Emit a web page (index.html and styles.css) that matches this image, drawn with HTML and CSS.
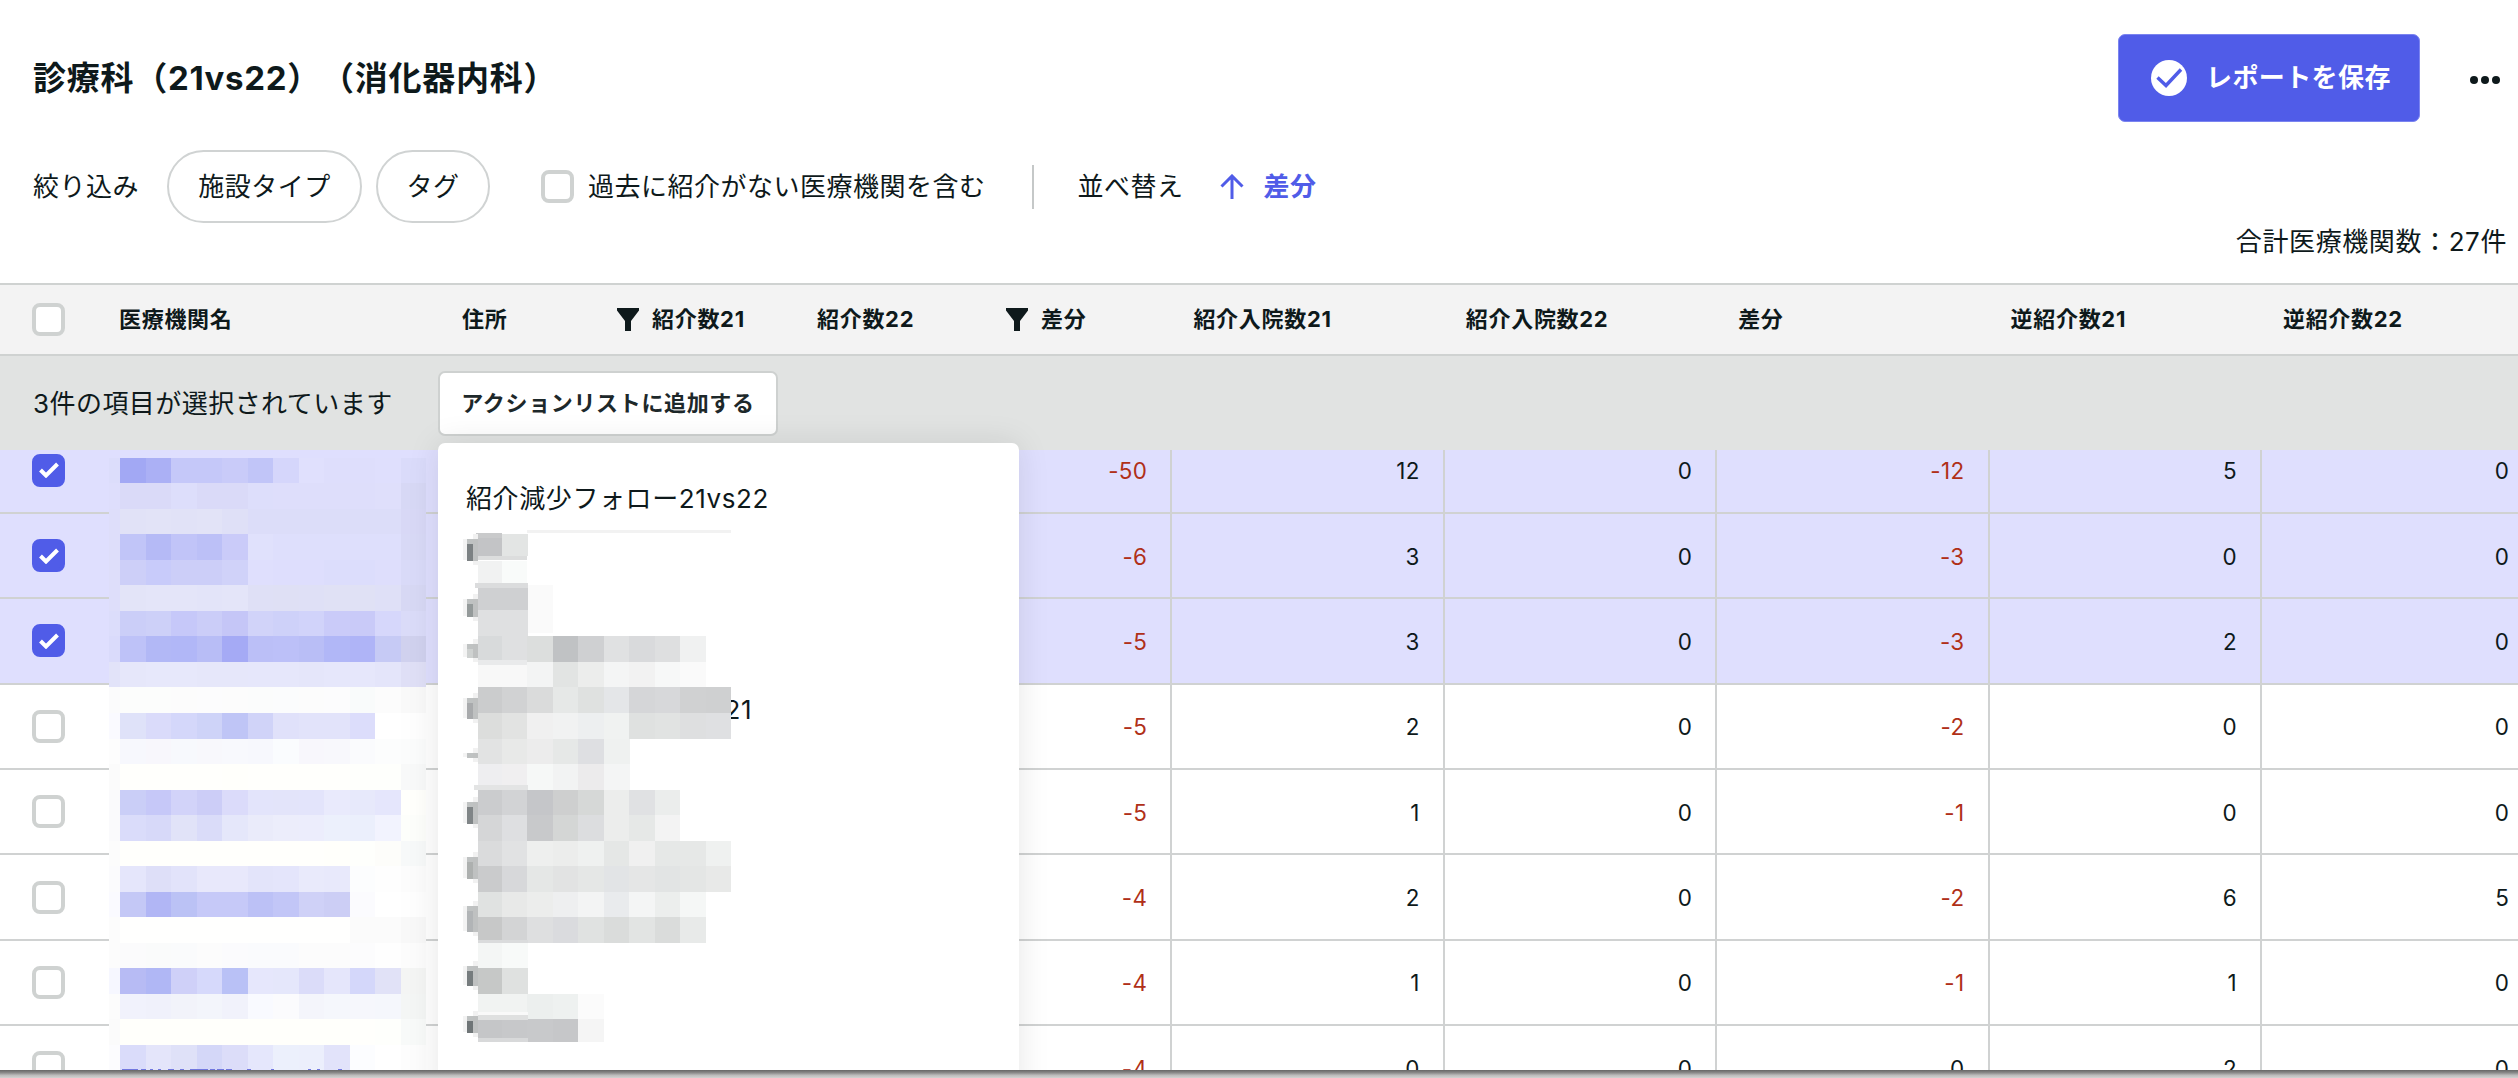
FILE: index.html
```html
<!DOCTYPE html>
<html lang="ja">
<head>
<meta charset="utf-8">
<title>診療科（21vs22）（消化器内科）</title>
<link rel="stylesheet" href="styles.css">
</head>
<body>
<div class="page">
  <header class="header">
    <h1 class="title">診療科（21vs22）（消化器内科）</h1>
    <button class="save">
      <svg class="save-icon" viewBox="0 0 36 36"><circle cx="18" cy="18" r="18" fill="#fff"/><path d="M6.500 17.500l8.500 8L30 9.500" fill="none" stroke="#505ce8" stroke-width="3.400"/></svg>
      <span>レポートを保存</span>
    </button>
    <svg class="more" viewBox="0 0 30 8"><circle cx="4" cy="4" r="4"/><circle cx="15" cy="4" r="4"/><circle cx="26" cy="4" r="4"/></svg>
  </header>

  <div class="filters">
    <span>絞り込み</span>
    <button class="chip chip-type">施設タイプ</button>
    <button class="chip chip-tag">タグ</button>
    <span class="check filter-check"></span>
    <span>過去に紹介がない医療機関を含む</span>
    <span class="divider"></span>
    <span>並べ替え</span>
    <svg class="arrow" viewBox="0 0 24 26"><path d="M12 25V2M1.500 12.500L12 2l10.500 10.500" fill="none" stroke="#505ce8" stroke-width="3"/></svg>
    <span class="sort-key">差分</span>
  </div>
  <div class="count">合計医療機関数：27件</div>

  <div class="grid thead">
    <div class="cell-check"><span class="check"></span></div>
    <div class="th">医療機関名</div>
    <div class="th">住所</div>
    <div class="th"><svg class="funnel" viewBox="0 0 22 23"><path d="M0 0h22v2.500L14 13v10H8V13L0 2.500z"/></svg>紹介数21</div>
    <div class="th">紹介数22</div>
    <div class="th"><svg class="funnel" viewBox="0 0 22 23"><path d="M0 0h22v2.500L14 13v10H8V13L0 2.500z"/></svg>差分</div>
    <div class="th">紹介入院数21</div>
    <div class="th">紹介入院数22</div>
    <div class="th">差分</div>
    <div class="th">逆紹介数21</div>
    <div class="th">逆紹介数22</div>
  </div>

  <div class="selection">
    <span class="selection-text">3件の項目が選択されています</span>
    <button class="action">アクションリストに追加する</button>
    <div class="menu">
      <div class="menu-item">紹介減少フォロー21vs22</div>
      <div class="menu-item"></div>
      <div class="menu-item"></div>
      <div class="menu-item"></div>
      <div class="menu-item menu-item-tail">21</div>
      <svg class="mosaic-menu" id="menu-mosaic" viewBox="456 528 280 540"></svg>
    </div>
  </div>

  <main class="rows">
    <div class="grid row selected"><div class="cell-check"><span class="check on"><svg viewBox="0 0 20 16"><path d="M1.500 8l5.500 5.500L18.500 2"/></svg></span></div><div></div><div></div><div></div><div></div><div class="num neg">-50</div><div class="num">12</div><div class="num">0</div><div class="num neg">-12</div><div class="num">5</div><div class="num">0</div></div>
    <div class="grid row selected"><div class="cell-check"><span class="check on"><svg viewBox="0 0 20 16"><path d="M1.500 8l5.500 5.500L18.500 2"/></svg></span></div><div></div><div></div><div></div><div></div><div class="num neg">-6</div><div class="num">3</div><div class="num">0</div><div class="num neg">-3</div><div class="num">0</div><div class="num">0</div></div>
    <div class="grid row selected"><div class="cell-check"><span class="check on"><svg viewBox="0 0 20 16"><path d="M1.500 8l5.500 5.500L18.500 2"/></svg></span></div><div></div><div></div><div></div><div></div><div class="num neg">-5</div><div class="num">3</div><div class="num">0</div><div class="num neg">-3</div><div class="num">2</div><div class="num">0</div></div>
    <div class="grid row"><div class="cell-check"><span class="check"></span></div><div></div><div></div><div></div><div></div><div class="num neg">-5</div><div class="num">2</div><div class="num">0</div><div class="num neg">-2</div><div class="num">0</div><div class="num">0</div></div>
    <div class="grid row"><div class="cell-check"><span class="check"></span></div><div></div><div></div><div></div><div></div><div class="num neg">-5</div><div class="num">1</div><div class="num">0</div><div class="num neg">-1</div><div class="num">0</div><div class="num">0</div></div>
    <div class="grid row"><div class="cell-check"><span class="check"></span></div><div></div><div></div><div></div><div></div><div class="num neg">-4</div><div class="num">2</div><div class="num">0</div><div class="num neg">-2</div><div class="num">6</div><div class="num">5</div></div>
    <div class="grid row"><div class="cell-check"><span class="check"></span></div><div></div><div></div><div></div><div></div><div class="num neg">-4</div><div class="num">1</div><div class="num">0</div><div class="num neg">-1</div><div class="num">1</div><div class="num">0</div></div>
    <div class="grid row"><div class="cell-check"><span class="check"></span></div><div></div><div></div><div></div><div></div><div class="num neg">-4</div><div class="num">0</div><div class="num">0</div><div class="num">0</div><div class="num">2</div><div class="num">0</div></div>
    <svg class="mosaic-names" id="name-mosaic" viewBox="109 450 318 620"></svg>
  </main>
  <footer class="window-edge"></footer>
</div>
<script src="mosaic.js"></script>
</body>
</html>
```

FILE: styles.css
```css
* { box-sizing: border-box; }

body {
  margin: 0;
  background: #fff;
  color: #0e191b;
  font-family: Inter, "Noto Sans CJK JP", sans-serif;
  font-size: 26px;
  letter-spacing: 0.5px;
  line-height: 1.5;
  text-spacing-trim: space-all;
}

button { font: inherit; letter-spacing: inherit; color: inherit; padding: 0; }

.page {
  display: flex;
  flex-direction: column;
  width: 2518px;
  height: 1078px;
  overflow: hidden;
}

.header {
  display: flex;
  align-items: center;
  flex: none;
  height: 122px;
  padding: 34px 18px 0 33px;
}
.title { flex: 1; margin: 0; font-size: 33px; font-weight: 700; letter-spacing: 0.75px; line-height: 48px; }
.save {
  display: flex;
  align-items: center;
  gap: 19px;
  width: 302px;
  height: 88px;
  padding: 0 0 1px 32px;
  border: 1px solid #7b84f0;
  border-radius: 7px;
  background: #505ce8;
  color: #fff;
  font-weight: 700;
  letter-spacing: 0.4px;
}
.save-icon { width: 36px; height: 36px; }
.more { width: 30px; height: 8px; margin: 4px 0 0 50px; fill: #0e191b; }

.filters { display: flex; align-items: center; flex: none; height: 73px; margin: 28px 0 0 33px; letter-spacing: 0.5px; white-space: nowrap; }
.chip { height: 73px; border: 2px solid #d0d3d3; border-radius: 37px; background: #fff; }
.chip-type { width: 195px; margin-left: 28px; }
.chip-tag { width: 114px; margin-left: 14px; }
.check {
  display: flex;
  align-items: center;
  justify-content: center;
  flex: none;
  width: 33px;
  height: 33px;
  border: 4px solid #cfd2d1;
  border-radius: 8px;
  background: #fff;
}
.check.on { border-color: #505ce8; background: #505ce8; }
.check svg { flex: none; width: 20px; height: 16px; fill: none; stroke: #fff; stroke-width: 4; }
.filter-check { margin: 0 14px 0 51px; }
.divider { width: 2px; height: 44px; margin: 0 44px 0 46px; background: #c5c8c8; }
.arrow { width: 24px; height: 26px; margin: 0 20px 0 36px; }
.sort-key { color: #505ce8; font-weight: 700; }
.count { flex: none; height: 60px; padding-right: 11px; line-height: 38px; letter-spacing: 0.6px; text-align: right; }

.grid { display: grid; grid-template-columns: 98px 343px 155px 200px 189px 187.4px repeat(5, 272.4px); }
.thead {
  flex: none;
  height: 73px;
  border-top: 2px solid #cfd2d1;
  border-bottom: 2px solid #cfd2d1;
  background: #f3f3f3;
  font-size: 22px;
  font-weight: 700;
  letter-spacing: 0.7px;
}
.cell-check { display: flex; align-items: center; padding-left: 32px; }
.th { display: flex; align-items: center; padding-left: 21px; white-space: nowrap; }
.funnel { width: 22px; height: 23px; margin-right: 13px; fill: #0e191b; }

.selection {
  position: relative;
  z-index: 2;
  display: flex;
  align-items: center;
  flex: none;
  height: 94px;
  padding-left: 33px;
  background: #e1e3e2;
}
.selection-text { width: 405px; letter-spacing: 0.45px; white-space: nowrap; }
.action {
  width: 340px;
  height: 65px;
  border: 2px solid #ced1d0;
  border-radius: 7px;
  background: #fff;
  color: #1d282a;
  font-size: 22px;
  font-weight: 700;
  letter-spacing: 0.65px;
}
.menu {
  position: absolute;
  left: 438px;
  top: 87px;
  width: 581px;
  height: 660px;
  padding: 30px 0 0 28px;
  border-radius: 7px;
  background: #fff;
  box-shadow: 0 0 32px rgba(0, 0, 0, 0.1);
}
.menu-item { height: 52.75px; line-height: 52px; letter-spacing: 0.6px; white-space: nowrap; }
.menu-item-tail { padding-left: 258.5px; }
.mosaic-menu { position: absolute; left: 18px; top: 85px; width: 280px; height: 540px; }

.rows { position: relative; flex: 1; min-height: 0; overflow: hidden; }
.row { height: 85.4px; border-bottom: 2px solid #d0d2d2; font-size: 22.4px; letter-spacing: 0.4px; }
.row:first-child { margin-top: -21.5px; }
.selected { background: #dfdffe; }
.num { display: flex; align-items: center; justify-content: flex-end; padding: 1.5px 23px 0 0; border-right: 2px solid #d0d2d2; }
.neg { color: #b03018; }
.mosaic-names { position: absolute; left: 109px; top: 0; width: 318px; height: 620px; }

.window-edge { position: relative; z-index: 3; flex: none; height: 8px; background: linear-gradient(#666, #8a8a8a 35%, #bbb 65%, #d2d2d2); }
```

FILE: mosaic.js
```js
const NS = "http://www.w3.org/2000/svg";

function rect(svg, x, y, w, h, fill) {
  const r = document.createElementNS(NS, "rect");
  r.setAttribute("x", x);
  r.setAttribute("y", y);
  r.setAttribute("width", w);
  r.setAttribute("height", h);
  r.setAttribute("fill", "#" + fill);
  r.setAttribute("shape-rendering", "crispEdges");
  svg.appendChild(r);
}

const STEP = 25.53;
const TOP = 457.7;

// Masked facility names: a narrow edge column, then twelve full columns.
const names = [
  "dcddfb a2a8f4 abb0f5 c5c8f9 c5c8f9 c9cbf9 c1c5f8 d5d6fb e0e0fd dedefc dedefc dfdffd dadbfa",
  "dedefc dadaf8 dadaf8 dddefb dadaf8 dadaf8 dddefb dedefb dedefb dedefb dedefb dfdffb d7d8f5",
  "dedefa e1e2f7 e2e3f7 e1e2f7 e2e3f7 dfe0f7 dcddf9 dcddf9 dcddf9 dcddf9 dcddf9 dcddf9 d8d8f6",
  "dedefa c1c5f8 b5baf6 c1c4f8 bcc0f7 cacbf9 e0e1fc dedffc dedffc dedffc dedffc dedffc d8d9f6",
  "dedefa cdcff8 c8cbfa cccef8 cccef8 d0d2f9 dfdffd dedefd dedefd dcddfc dcddfc dedefc d9daf8",
  "dedefa e3e4f8 e4e5f9 e4e5f9 e3e4f9 e4e5f9 dfe0f6 dfe0f5 dfe0f6 e0e1f5 e0e1f5 dfe0f7 d7d8f4",
  "dcddfb cbcef8 cdd0f8 c6c8f9 cbcdf8 c5c6f7 d1d3f9 ced1f9 d1d3fa cacbf9 c9caf8 d6d7fb dadbf8",
  "dadbfb bec2f8 b2b8f6 b1b7f7 b8bdf6 a5aaf5 bbbff7 bcc0f8 b9bef6 b1b7f7 afb4f7 c6caf5 d0d1ee",
  "e2e3f9 e6e7fa e7e8fb e7e8fb e6e7fa e6e7fa e6e7fb e6e7fb e5e6fa e6e7fb e6e7fb e4e5fa dfdff6",
  "fbfbfc fcfdfc fcfdfc fcfcfc fcfcfd fcfcfc fbfcfc fbfcfd fcfcfc fcfcfd f9fbfb fcfcfc f9f9f9",
  "fafaff dfe2f9 dadbfa d4d7fa ced3f8 bfc5f6 d0d3f8 e0e1fa e2e3fa e2e3fa dcddfb ffffff fefefe",
  "fdfdfd f7f8fd f8f7fc f7f9fd f8f8fc f8f9fd f7f8fd fafcfe f8f7fc f8f8fc fafbfd fcfdfd fbfcfc",
  "fbfbfb fffffc fffffc fffffc fffffc fffffb fffffc fffffc fffffc fffffc fefffc fefffc f8f9f9",
  "fafafc cacef7 c6c8f8 d2d3f9 cccdf7 dbdbfa e3e4fb e3e4fa e3e4fb e9eafc e7e9fb e5e6fc fffffc",
  "fafafc dadcfa d7d9f9 e1e3f8 dadcf9 e5e7fa eaebfa ecedfb ecedfc ecf0fc ebeffc f2f3fe fdfefb",
  "fcfcfc fffffc fffffc fffffc fffffc fffffc fffffc fffffc fffffc fffffb fefffc fdfdfa f7f9f9",
  "fbfbfd e5e6fb dedff8 e2e3fa e8e8fb e8e8fb e3e4fa e4e5fb e9eafb e8e9fb fcfdfe fefefe fcfcfc",
  "fafaff c4c8f6 b1b6f5 bbc2f5 c6c9f8 c6c9f8 bcc1f6 c2c6f7 cfd1f7 cccef5 fbfbfe ffffff fefefe",
  "fcfcfc fffffe fffffe fffffe fffffe fffffe fffffe fffffe fffffe fffffe fbfbfb fbfbfb f8f8f8",
  "fcfcfc fbfbfc fafbfb fafbfc fcfcfc fbfbfd fafbfd fafbfd fcfcfc fcfcfc fcfcfd fefefe fcfcfc",
  "f6f7ff b7bbf4 b0b7f5 cfd0f8 d6d9fb b9c1f6 e6e7fc e5e7fb dbdcf9 e5e6fb d4d7fa e1e2f7 f4f5f4",
  "fcfcfc f1f2fc f0f1fb f2f3fa f3f5fb f1f2fb f9faff fbfbfd f4f5fb f5f7fc f6f7fc f5f7fc f4f6f5",
  "fbfbfb fffffb fffffb fffffb fffffb fffffb fffffb fffffb fffffb fffffb fffffc fefffc f8faf9",
  "fcfcfe dadcfa e4e5fa dfe1f8 d4d7f8 dcddf9 e5e7fc ecf0fc eceffc e2e3fa fcfdff ffffff fdfdfd"
];

const nameSvg = document.getElementById("name-mosaic");
names.forEach((line, r) => {
  line.split(" ").forEach((c, i) => {
    const x = i === 0 ? 109 : 120 + (i - 1) * 25.5;
    rect(nameSvg, x, TOP + r * STEP, (i === 0 ? 11 : 25.5) + 0.3, STEP + 0.3, c);
  });
});
// Tops of the text line just below the mask.
[[122, 16], [141, 5], [150, 3], [158, 3], [168, 6], [180, 4], [190, 18], [210, 5], [217, 7], [226, 6], [247, 4], [271, 3], [308, 3], [317, 3], [338, 4]]
  .forEach(([x, w]) => rect(nameSvg, x, 1069, w, 1, "7278df"));

// Masked menu entries: [x, y, width, height, fill].
const menuSvg = document.getElementById("menu-mosaic");
const soft = [
  [527, 530, 204, 3, "f2f2f2"],
  [476, 533, 26, 5, "c9cacb"], [478, 538, 24, 18, "c3c4c6"], [502, 534, 25.500, 22, "e3e5e4"], [478, 556, 49, 4, "dcdddd"],
  [478, 561, 24, 22, "f1f2f2"], [502, 561, 25, 22, "f9fbfa"],
  [475, 583, 52.500, 5, "dbdcdd"], [478, 588, 49.500, 22, "cfd0d2"], [478, 610, 49.500, 26, "dfe0e1"], [527.500, 585, 25.500, 48, "fafafa"],
  [478, 636, 24, 24, "d8dadb"], [502, 636, 25.500, 24, "dfe0e1"], [478, 660, 70, 5, "e9eaeb"], [478, 665, 50, 22, "f8f8f8"]
];
soft.forEach(a => rect(menuSvg, ...a));

// Regular blocks: start row, then fills left to right from x = 478.
const blocks = {
  7: "- - dcdedd c0c2c4 cfd0d2 e0e1e2 d9dadc dedfe0 f0f1f1",
  8: "- - f3f4f4 e2e4e3 ecedec f4f5f5 f2f2f2 f7f8f8 fafafa",
  9: "cbcccd d1d2d3 dadbdb e6e8e7 dfe1e0 e4e6e8 d5d6d8 d7d8da d0d1d2 cfd0d1",
  10: "dcdddc e2e3e2 f0f0f0 f1f2f2 edeff0 f0f2f1 dfe1e0 e1e3e2 dedfe0 dfe0e2",
  11: "e2e3e3 e8e9e8 ececec e6e8e7 dedfe2 eff1f0",
  12: "eeeef0 f0eff0 f6f8f7 f2f3f3 ecebec f4f5f5",
  13: "cbccce d2d3d5 c5c6c9 cecfcf d6d8d7 ecedec e0e1e3 ebedec",
  14: "d5d6d7 dedfe1 c8c9cb d4d6d5 dcdddf ecedec e6e8e7 f3f3f3",
  15: "dadbdc e1e2e3 eeefee ecedec eff1f0 e5e7e6 f0f0f0 e6e8e7 e6e8e7 eff1f0",
  16: "cacbcc d7d8da e5e7e6 e2e3e3 e5e7e6 e2e4e6 e5e6e6 e2e4e4 e4e6e5 e8e9e8",
  17: "e0e2e1 e8e9e8 ecedec eeeff0 f3f4f4 e9ebed f4f5f5 eceeed f5f7f6",
  18: "c7c8c8 d3d4d5 dedfe0 dadbde e0e2e1 dadcdb e2e4e3 dadcdb e8eae9",
  19: "f4f6f5 f8faf9",
  20: "c6c8c7 dfe1e0",
  21: "f1f3f2 f1f3f2 ecefee eef1f0 fbfbfb",
  22: "c5c6c8 c7c8ca c8c9cb c6c7c9 f5f5f5"
};
Object.entries(blocks).forEach(([row, line]) => {
  line.split(" ").forEach((c, i) => {
    if (c === "-") return;
    const x = i === 0 ? 478 : 502 + (i - 1) * 25.45;
    rect(menuSvg, x, TOP + row * STEP, (i === 0 ? 24 : 25.45) + 0.3, row === "22" ? 22.5 : STEP + 0.3, c);
  });
});
[[474, 785, 54, 5, "e3e4e4"], [478, 940, 50, 3, "dadbdc"], [478, 1012, 50, 3, "f9f9f9"], [478, 1015, 50, 5, "dfe0e0"], [478, 1038, 50, 4, "d8d9da"]]
  .forEach(a => rect(menuSvg, ...a));

// Leading character edges left of the block columns.
[
  [539, 22, "7c8183"], [599, 18, "949a9a"], [644, 14, "cfd2d1"], [698, 21, "a8aaac"], [753, 5, "bfc2c1"],
  [802, 22, "808587"], [857, 22, "adb0af"], [906, 26, "b1b4b6"], [966, 20, "767c7e"], [1016, 17, "6f7577"]
].forEach(([y, h, c]) => {
  rect(menuSvg, 463, y, 4, h - 1, "f3f3f3");
  rect(menuSvg, 473, y - 5, 5, h + 9, "f1f1f1");
  rect(menuSvg, 467, y, 6, h, c);
  rect(menuSvg, 467, y, 6, 5, "bfc2c2");
  rect(menuSvg, 473, y, 5, h, "bfc1c1");
});
```
